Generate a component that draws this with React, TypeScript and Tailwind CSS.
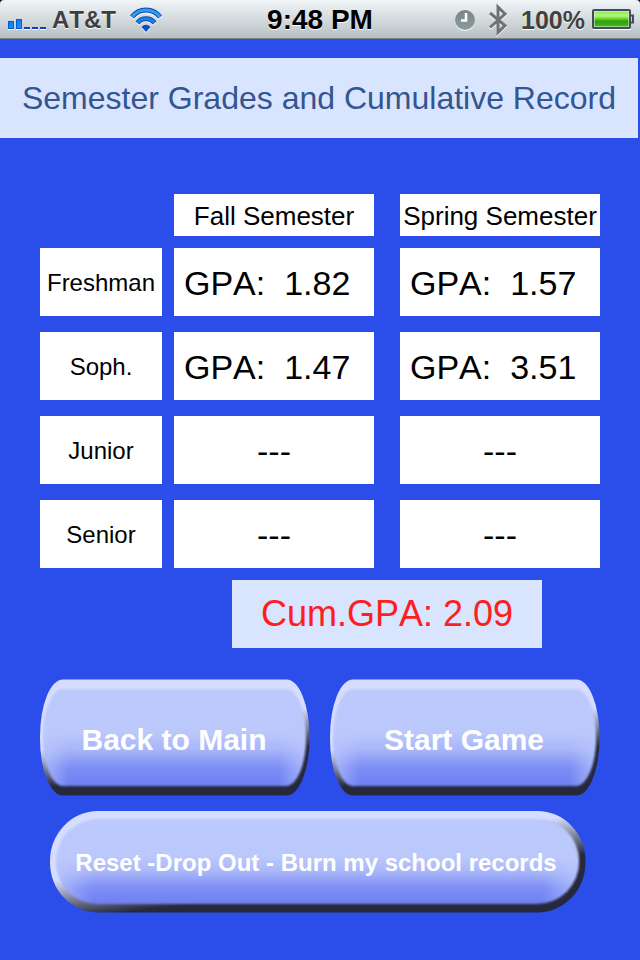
import React from "react";

interface YearRecord {
  year: string;
  fall: string | null;
  spring: string | null;
}

const records: YearRecord[] = [
  { year: "Freshman", fall: "1.82", spring: "1.57" },
  { year: "Soph.", fall: "1.47", spring: "3.51" },
  { year: "Junior", fall: null, spring: null },
  { year: "Senior", fall: null, spring: null },
];

const cumulativeGpa = "2.09";

function SignalIcon() {
  return (
    <svg width="40" height="14" viewBox="0 0 40 14" className="shrink-0" aria-hidden="true">
      <defs>
        <linearGradient id="signal" x1="0" y1="0" x2="1" y2="1">
          <stop offset="0" stopColor="#0a6fe0" />
          <stop offset="1" stopColor="#1ea2f8" />
        </linearGradient>
      </defs>
      <path d="M1 12.5h6M9 12.5h6M17 12.5h6M25 12.5h6M33 12.5h6" stroke="#fff" strokeWidth="1" />
      <rect x="1.5" y="4.5" width="5" height="7" fill="url(#signal)" stroke="#0a58d0" />
      <rect x="9.5" y="2.5" width="5" height="9" fill="url(#signal)" stroke="#0a58d0" />
      <path d="M17 11h6M25 11h6M33 11h6" stroke="#0a45c8" strokeWidth="2" />
    </svg>
  );
}

function WifiIcon() {
  return (
    <svg width="34" height="26" viewBox="0 0 34 26" className="shrink-0" aria-hidden="true">
      <g transform="translate(0 1)" fill="none" stroke="#fff" strokeWidth="5">
        <path d="M3 10A17.5 17.5 0 0 1 31 10" />
        <path d="M8.5 16A10.5 10.5 0 0 1 25.5 16" />
        <path d="M12.5 20Q17 15.5 21.5 20L17 25Z" fill="#fff" stroke="none" />
      </g>
      <g fill="none" stroke="#1148b4" strokeWidth="5">
        <path d="M3 10A17.5 17.5 0 0 1 31 10" />
        <path d="M8.5 16A10.5 10.5 0 0 1 25.5 16" />
      </g>
      <path d="M3 10A17.5 17.5 0 0 1 31 10" fill="none" stroke="#2b9ff0" strokeWidth="3" />
      <path d="M8.5 16A10.5 10.5 0 0 1 25.5 16" fill="none" stroke="#1b7fe6" strokeWidth="3" />
      <path d="M12.5 20Q17 15.500 21.5 20L17 25Z" fill="#0c4acb" />
    </svg>
  );
}

function ClockIcon() {
  return (
    <svg width="22" height="22" viewBox="0 0 22 22" className="shrink-0" aria-hidden="true">
      <defs>
        <linearGradient id="clock" x1="0" y1="0" x2="0" y2="1">
          <stop offset="0" stopColor="#7b8487" />
          <stop offset="1" stopColor="#8c9b9b" />
        </linearGradient>
      </defs>
      <circle cx="11" cy="12" r="10" fill="#fff" />
      <circle cx="11" cy="11" r="10" fill="url(#clock)" />
      <path d="M12 4V11.5H7" fill="none" stroke="#fff" strokeWidth="2.5" />
    </svg>
  );
}

function BluetoothIcon() {
  return (
    <svg width="20" height="34" viewBox="0 0 20 34" className="shrink-0" aria-hidden="true">
      <path d="M2 11L17 23.5L10 30.5V5L17 12L2 25.5" fill="none" stroke="#fff" strokeWidth="3" />
      <path d="M2 10L17 22.5L10 29.5V4L17 11L2 24.5" fill="none" stroke="#6f7274" strokeWidth="3" />
    </svg>
  );
}

function BatteryIcon() {
  return (
    <svg width="42" height="22" viewBox="0 0 42 22" className="shrink-0" aria-hidden="true">
      <defs>
        <linearGradient id="battery" x1="0" y1="0" x2="0" y2="1">
          <stop offset="0" stopColor="#8ee85a" />
          <stop offset="0.3" stopColor="#b4f77c" />
          <stop offset="0.5" stopColor="#62cf28" />
          <stop offset="0.65" stopColor="#2f9d0c" />
          <stop offset="1" stopColor="#46b81c" />
        </linearGradient>
      </defs>
      <path d="M1 20.5H39" stroke="#fff" />
      <rect x="1" y="1" width="37" height="18" rx="1" fill="#e8f5e4" stroke="#454a60" strokeWidth="2" />
      <rect x="2.5" y="2.5" width="34" height="15" fill="url(#battery)" />
      <path d="M39 6.5H41V13.5H39" fill="#d0d4d8" stroke="#454a60" strokeWidth="2" />
    </svg>
  );
}

function StatusBar() {
  return (
    <div className="bg-black">
      <header className="grid h-[39px] grid-cols-[1fr_auto_1fr] items-center rounded-t-[4px] border-b border-[#7d8386] bg-linear-to-b from-[#f0f6f8] to-[#b9c0c3] px-[6px] font-bold text-[#404040] [text-shadow:0_1px_0_#fff]">
        <div className="flex items-center">
          <div className="pt-2 pl-px">
            <SignalIcon />
          </div>
          <span className="ml-[5px] pt-px text-[24px] leading-[38px]">AT&amp;T</span>
          <div className="ml-[13px] pt-px">
            <WifiIcon />
          </div>
        </div>
        <time className="text-[28px] leading-[38px] text-black">9:48 PM</time>
        <div className="flex items-center justify-end">
          <ClockIcon />
          <div className="ml-3">
            <BluetoothIcon />
          </div>
          <span className="mr-[7px] ml-[13px] pt-px text-[25px] leading-[38px]">100%</span>
          <BatteryIcon />
        </div>
      </header>
    </div>
  );
}

function GradeCell({ gpa }: { gpa: string | null }) {
  return (
    <td className="flex h-[68px] flex-1 items-center bg-white pt-[2px] text-[34px] leading-[40px] whitespace-pre last:ml-[26px]">
      {gpa ? (
        <span className="pl-[10px]">{`GPA:  ${gpa}`}</span>
      ) : (
        <span className="w-full text-center">---</span>
      )}
    </td>
  );
}

function GradesTable() {
  return (
    <table className="mx-10 mt-14 block text-black">
      <thead className="block">
        <tr className="flex">
          <td className="mr-3 w-[122px] shrink-0" />
          <th scope="col" className="h-[42px] flex-1 bg-white pt-[2px] text-[26px] leading-[40px] font-normal whitespace-nowrap">
            Fall Semester
          </th>
          <th scope="col" className="ml-[26px] h-[42px] flex-1 bg-white pt-[2px] text-[26px] leading-[40px] font-normal whitespace-nowrap">
            Spring Semester
          </th>
        </tr>
      </thead>
      <tbody className="mt-3 flex flex-col gap-4">
        {records.map((record) => (
          <tr key={record.year} className="flex">
            <th scope="row" className="mr-3 h-[68px] w-[122px] shrink-0 bg-white pt-[2px] text-[24px] leading-[66px] font-normal">
              {record.year}
            </th>
            <GradeCell gpa={record.fall} />
            <GradeCell gpa={record.spring} />
          </tr>
        ))}
      </tbody>
    </table>
  );
}

// Shared fills for the glossy button faces
function ButtonGradients() {
  return (
    <svg width="0" height="0" className="absolute" aria-hidden="true">
      <defs>
        <linearGradient id="face" x1="0" y1="0" x2="0" y2="1">
          <stop offset="0" stopColor="#bcc9fc" />
          <stop offset="0.45" stopColor="#bbc8fb" />
          <stop offset="0.62" stopColor="#a9b6f9" />
          <stop offset="0.82" stopColor="#7b8df5" />
          <stop offset="1" stopColor="#7080f2" />
        </linearGradient>
        <linearGradient id="sides-small" x1="0" y1="0" x2="1" y2="0">
          <stop offset="0" stopColor="#bcc9fc" stopOpacity="0.7" />
          <stop offset="0.1" stopColor="#bcc9fc" stopOpacity="0" />
          <stop offset="0.9" stopColor="#bcc9fc" stopOpacity="0" />
          <stop offset="1" stopColor="#bcc9fc" stopOpacity="0.7" />
        </linearGradient>
        <linearGradient id="sides-wide" x1="0" y1="0" x2="1" y2="0">
          <stop offset="0" stopColor="#bcc9fc" stopOpacity="0.7" />
          <stop offset="0.07" stopColor="#bcc9fc" stopOpacity="0" />
          <stop offset="0.93" stopColor="#bcc9fc" stopOpacity="0" />
          <stop offset="1" stopColor="#bcc9fc" stopOpacity="0.7" />
        </linearGradient>
        <linearGradient id="rim-small" gradientUnits="userSpaceOnUse" x1="132" y1="50" x2="138" y2="88">
          <stop offset="0" stopColor="#d7ddff" />
          <stop offset="1" stopColor="#26293b" />
        </linearGradient>
        <linearGradient id="rim-wide" gradientUnits="userSpaceOnUse" x1="264" y1="37" x2="269" y2="77">
          <stop offset="0" stopColor="#d7ddff" />
          <stop offset="1" stopColor="#26293b" />
        </linearGradient>
        <filter id="soften">
          <feGaussianBlur stdDeviation="0.8" />
        </filter>
      </defs>
    </svg>
  );
}

function SmallButton({ label }: { label: string }) {
  return (
    <button type="button" className="relative h-[117px] flex-1 cursor-pointer pt-1 pr-[2px] text-[30px] font-bold text-white">
      <svg viewBox="0 0 270 117" preserveAspectRatio="none" className="absolute inset-0 h-full w-full" aria-hidden="true">
        <rect x="0" y="0.5" width="269.5" height="116" rx="23" ry="57" fill="url(#rim-small)" />
        <g filter="url(#soften)">
          <rect x="3" y="10" width="263" height="97" rx="20" ry="49" fill="url(#face)" />
          <rect x="3" y="10" width="263" height="97" rx="20" ry="49" fill="url(#sides-small)" />
        </g>
      </svg>
      <span className="relative">{label}</span>
    </button>
  );
}

function WideButton({ label }: { label: string }) {
  return (
    <button type="button" className="relative h-[102px] flex-1 cursor-pointer pt-[2px] pr-1 text-[24px] font-bold text-white">
      <svg viewBox="0 0 536 102" preserveAspectRatio="none" className="absolute inset-0 h-full w-full" aria-hidden="true">
        <rect x="0" y="0" width="535.5" height="101.5" rx="48" ry="50" fill="url(#rim-wide)" />
        <g filter="url(#soften)">
          <rect x="6" y="8" width="523" height="85" rx="42" ry="42" fill="url(#face)" />
          <rect x="6" y="8" width="523" height="85" rx="42" ry="42" fill="url(#sides-wide)" />
        </g>
      </svg>
      <span className="relative">{label}</span>
    </button>
  );
}

export default function App() {
  return (
    <div className="flex min-h-screen flex-col bg-[#2b4eea] font-['Liberation_Sans',Arial,sans-serif] [font-kerning:none]">
      <StatusBar />
      <ButtonGradients />
      <main>
        <h1 className="mt-[19px] mr-[2px] bg-[#d9e4ff] text-center text-[32px] leading-[80px] text-[#335590]">
          Semester Grades and Cumulative Record
        </h1>

        <GradesTable />

        <p className="mt-3 mr-[98px] ml-auto w-[310px] bg-[#d9e4ff] text-center text-[36px] leading-[68px] text-[#ff1d1d]">
          Cum.GPA: {cumulativeGpa}
        </p>

        <div className="mx-10 mt-[31px] flex gap-5">
          <SmallButton label="Back to Main" />
          <SmallButton label="Start Game" />
        </div>

        <div className="mt-[15px] mr-[54px] ml-[50px] flex">
          <WideButton label="Reset -Drop Out - Burn my school records" />
        </div>
      </main>
    </div>
  );
}
